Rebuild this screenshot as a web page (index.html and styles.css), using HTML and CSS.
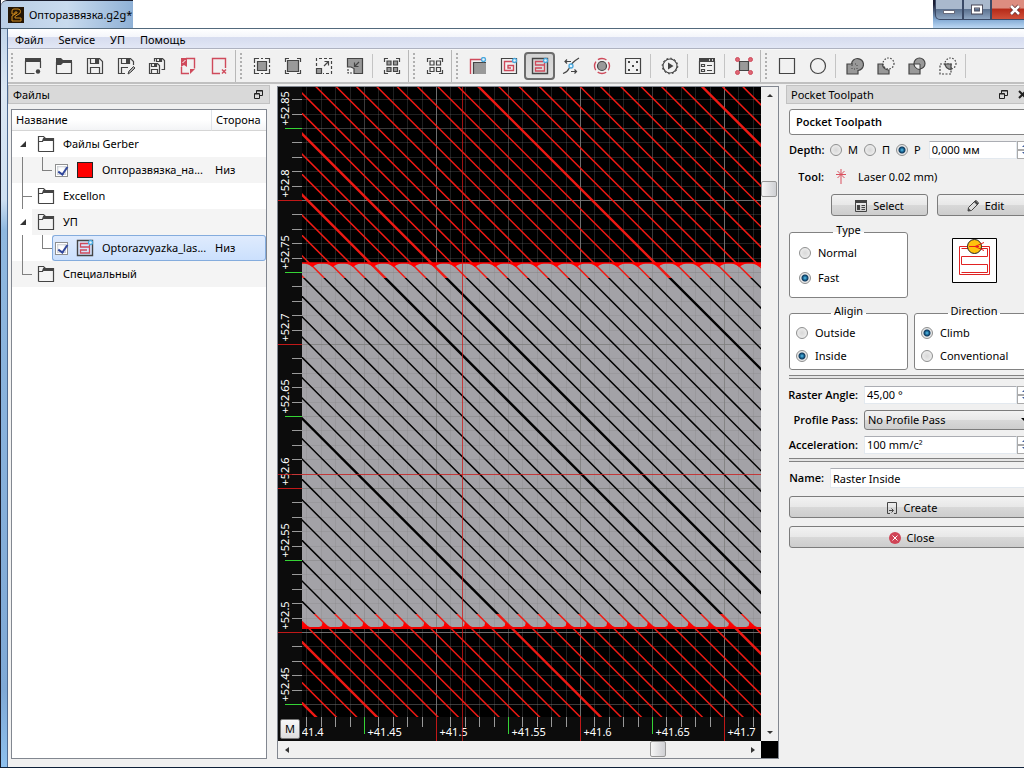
FILE: index.html
```html
<!doctype html>
<html lang="ru">
<head>
  <meta charset="UTF-8">
  <meta name="viewport" content="width=device-width, initial-scale=1.0">
  <title>Опторазвязка.g2g*</title>
  <link rel="stylesheet" href="styles.css">
</head>
<body>
  <svg class="defs" aria-hidden="true">
    <defs>
      <symbol id="i-folder" viewBox="0 0 18 18">
        <path d="M1.5 16.5v-15h5l2 2h-2l-1 3h-4M5.5 6.5l1-3h10v13h-15" fill="none" stroke="#444" stroke-width="1.2"/>
        <path d="M6 3h11v3H6z" fill="#444"/>
      </symbol>
      <symbol id="i-pocket" viewBox="0 0 18 18">
        <path d="M1.5 1.5h15v15h-15z" fill="none" stroke="#444" stroke-width="1.4"/>
        <path d="M12 4.5H4.5v3.500h9v6h-9V11H11M13.500 8V6" fill="none" stroke="#cf4a5b" stroke-width="1.3"/>
        <circle cx="14.500" cy="3.500" r="2" fill="#e4f4fc" stroke="#4ba7dc" stroke-width="1.300"/>
      </symbol>
    </defs>
  </svg>

  <div class="window">
    <header class="titlebar">
      <div class="caption">
        <svg class="app-icon" viewBox="0 0 16 16">
          <path d="M0 0h16v16H0z" fill="#251606"/>
          <path d="M4 7V4q0-2 2-2h4q2.500 0 2.500 2.500T10 7.500L7 9.500V11h6v3H4V9l5-3V5H7v2z" fill="none" stroke="#d08a1c" stroke-width="1"/>
        </svg>
        <span>Опторазвязка.g2g*</span>
      </div>
      <div class="win-buttons">
        <button class="win-btn" aria-label="Свернуть"><svg viewBox="0 0 14 12"><path d="M1.500 6.500h11v3h-11z" fill="#fff" stroke="#556" stroke-width=".8"/></svg></button>
        <button class="win-btn" aria-label="Развернуть"><svg viewBox="0 0 14 12"><path d="M3 2.500h8v6H3z" fill="none" stroke="#445" stroke-width="4"/><path d="M3 2.500h8v6H3z" fill="none" stroke="#fff" stroke-width="2.200"/></svg></button>
        <button class="win-btn win-close" aria-label="Закрыть"><svg viewBox="0 0 14 12"><path d="M3 2l8 8M11 2l-8 8" stroke="#633" stroke-width="4"/><path d="M3 2l8 8M11 2l-8 8" stroke="#fff" stroke-width="2.600"/></svg></button>
      </div>
    </header>

    <div class="client">
      <nav class="menubar">
        <a href="#">Файл</a>
        <a href="#">Service</a>
        <a href="#">УП</a>
        <a href="#">Помощь</a>
      </nav>

      <div class="toolbar">
        <div class="group">
          <button aria-label="New"><svg viewBox="0 0 18 18"><path d="M1 1h16v4H1z" fill="#444"/><path d="M1.500 4v12.500h9M16.500 4v7" class="ln"/><circle cx="14" cy="14.500" r="2.200" fill="#444"/></svg></button>
          <button aria-label="Open"><svg viewBox="0 0 18 18"><path d="M1 1h5l2 2h9v3H8L6 8H1z" fill="#444"/><path d="M1.500 5v11.500h15V5" class="ln"/></svg></button>
          <button aria-label="Save"><svg viewBox="0 0 18 18"><path d="M1.500 1.500h12l3 3v12h-15zM4.500 1.500v5h8v-5M4.500 16.500v-6h9v6" class="ln"/><path d="M9 2h3v4H9z" fill="#444"/></svg></button>
          <button aria-label="Save as"><svg viewBox="0 0 18 18"><path d="M8 16.500H1.500v-15h12l3 3V8M4.500 1.500v5h8v-5M4.500 16.500v-6H11" class="ln"/><path d="M9 2h3v4H9z" fill="#444"/><path d="M11 17l1-3 4.500-4.500 1.500 1.500-4.500 4.500z" fill="#aaa" stroke="#444"/></svg></button>
          <button aria-label="Save all"><svg viewBox="0 0 18 18"><path d="M1.500 6.500h8l2 2v8h-10zM3.500 6.500v3h5v-3M3.500 16.500v-4h6v4" class="ln"/><path d="M6 7h2v2H6zM11 2h2v3h-2z" fill="#444"/><path d="M6.500 4.500v-3h8l2 2v9h-3M8.500 1.500v3h5v-3" class="ln"/></svg></button>
          <button aria-label="Export PDF"><svg viewBox="0 0 18 18"><path d="M7 1.500h8.500v10M2.500 10v6.500H10" class="rd"/><path d="M2 1h6v9L5 8l-3 2z" fill="#cf4a5b"/><path d="M3.500 6l3-3" stroke="#fff"/><path d="M11 12h5l-5 5z" fill="#cf4a5b"/></svg></button>
          <button aria-label="Close file"><svg viewBox="0 0 18 18"><path d="M10 16.500H2.500v-15h13V11M12 12.500l4 4M16 12.500l-4 4" class="rd"/></svg></button>
        </div>
        <div class="group">
          <button aria-label="Zoom fit"><svg viewBox="0 0 18 18"><path d="M4.500 4.500h9v9h-9z" class="gr"/><path d="M1.500 6V1.500H6M12 1.500h4.500V6M16.500 12v4.500H12M6 16.500H1.500V12M8 1.500h2M8 16.500h2M1.500 8v2M16.500 8v2" class="ln"/></svg></button>
          <button aria-label="Zoom selected"><svg viewBox="0 0 18 18"><path d="M3.500 3.500h11v11h-11z" class="gr"/><path d="M1.500 5V1.500H5M13 1.500h3.500V5M16.500 13v3.500H13M5 16.500H1.500V13" class="ln"/></svg></button>
          <button aria-label="Zoom in"><svg viewBox="0 0 18 18"><path d="M1.500 11.500h5v5h-5z" class="gr"/><path d="M1.500 9V1.500h15v15H8" class="ln" stroke-dasharray="3 2"/><path d="M9 9l4-4M9.500 4.500h4v4" class="ln"/></svg></button>
          <button aria-label="Zoom out"><svg viewBox="0 0 18 18"><path d="M1.500 1.500h15v15H8v-5l-3-1.500H1.500z" class="gr"/><path d="M13 5l-4 4M8.500 5.500v4h4" class="ln"/><path d="M2 12v4h4" class="ln" stroke-dasharray="2 1"/></svg></button>
          <span class="sep"></span>
          <button aria-label="Select all"><svg viewBox="0 0 18 18"><path d="M4 4h4v4H4zM10.500 4h4v4h-4zM4 10.500h4v4H4zM10.500 10.500h4v4h-4z" class="gr"/><path d="M1.500 5V1.500H5M13 1.500h3.500V5M16.500 13v3.500H13M5 16.500H1.500V13" class="ln"/></svg></button>
        </div>
        <div class="group">
          <button aria-label="Deselect"><svg viewBox="0 0 18 18"><path d="M4 4h4v4H4zM10.500 4h4v4h-4zM4 10.500h4v4H4zM10.500 10.500h4v4h-4z" class="ln"/><path d="M1.500 5V1.500H5M13 1.500h3.500V5M16.500 13v3.500H13M5 16.500H1.500V13" class="ln"/></svg></button>
        </div>
        <div class="group">
          <button aria-label="Profile"><svg viewBox="0 0 18 18"><path d="M1.500 17V2.500H14" class="rd"/><path d="M4 5h13v12H4z" fill="#999"/><path d="M4.500 17V5.500H17" class="ln"/><circle cx="14.500" cy="2.500" r="2" class="bl"/></svg></button>
          <button aria-label="Spiral pocket"><svg viewBox="0 0 18 18"><path d="M1.500 1.500h15v15h-15z" class="ln"/><path d="M13 4.500H4.500v9h9v-5H8v2.500h3" class="rd"/><circle cx="14.500" cy="3.500" r="2" class="bl"/></svg></button>
          <button class="active" aria-label="Raster pocket"><svg><use href="#i-pocket"/></svg></button>
          <button aria-label="Voronoi"><svg viewBox="0 0 18 18"><path d="M1 16.500q4-1 6-5t4-6 6-4.500M3 4.500h6M5 2.500l-2 2 2 2M9 14.500h5M12.500 12.500l2 2-2 2" class="ln"/><circle cx="9" cy="9" r="2" class="bl"/></svg></button>
          <button aria-label="Thermal"><svg viewBox="0 0 18 18"><circle cx="9" cy="9" r="7.500" class="rd" stroke-dasharray="9 2.780" stroke-dashoffset="4.500"/><circle cx="9" cy="9" r="4.500" class="gr"/></svg></button>
          <button aria-label="Drilling"><svg viewBox="0 0 18 18"><path d="M1.500 1.500h15v15h-15z" class="ln"/><path d="M4 4h2v2H4zM12 4h2v2h-2zM8 8h2v2H8zM4 12h2v2H4zM12 12h2v2h-2z" fill="#444"/></svg></button>
          <span class="sep"></span>
          <button aria-label="Run"><svg viewBox="0 0 18 18"><circle cx="9" cy="9" r="7" class="ln"/><circle cx="9" cy="9" r="7.800" fill="none" stroke="#444" stroke-dasharray="2 2.080"/><path d="M7 5.500L12.500 9 7 12.500z" fill="#444"/></svg></button>
          <span class="sep"></span>
          <button aria-label="Properties"><svg viewBox="0 0 18 18"><path d="M1 1h16v4H1z" fill="#444"/><path d="M11 3h1M14 3h1" stroke="#fff" stroke-width="1.500"/><path d="M1.500 4v12.500h15V4M3.500 7.500h3v2h-3zM3.500 12.500h3v2h-3zM9 8.500h5M9 13.500h5" class="ln"/></svg></button>
          <span class="sep"></span>
          <button aria-label="Snap"><svg viewBox="0 0 18 18"><path d="M4.500 4.500h9v9h-9z" class="gr"/><g fill="#dd6674" stroke="#cf4a5b"><circle cx="2.500" cy="2.500" r="2"/><circle cx="15.500" cy="2.500" r="2"/><circle cx="2.500" cy="15.500" r="2"/><circle cx="15.500" cy="15.500" r="2"/></g></svg></button>
        </div>
        <div class="group last">
          <button aria-label="Rectangle"><svg viewBox="0 0 18 18"><path d="M1.500 1.500h15v15h-15z" class="ln"/></svg></button>
          <button aria-label="Circle"><svg viewBox="0 0 18 18"><circle cx="9" cy="9" r="7.500" class="ln"/></svg></button>
          <span class="sep"></span>
          <button aria-label="Union"><svg viewBox="0 0 18 18"><path d="M1 7h4.500a6 6 0 1 1 6.500 6.500V17H1z" class="gr"/><path d="M6 7h5v6M6 8v4h5" fill="none" stroke="#444" stroke-dasharray="1 2"/></svg></button>
          <button aria-label="Subtract"><svg viewBox="0 0 18 18"><path d="M1 7h4.500a6 6 0 0 0 6.500 6V17H1z" class="gr"/><circle cx="11.500" cy="6.500" r="5.500" class="ln" stroke-dasharray="1.500 1.500"/></svg></button>
          <button aria-label="Exclude"><svg viewBox="0 0 18 18"><path d="M1 7h11v10H1z" class="gr"/><circle cx="11.500" cy="6.500" r="5.500" class="gr"/><path d="M6 7h6v5.500a6 6 0 0 1-6-5.500z" fill="#f0f0f0" stroke="#444"/></svg></button>
          <button aria-label="Intersect"><svg viewBox="0 0 18 18"><path d="M1 7h11v10H1z" class="ln" stroke-dasharray="2 1.500"/><circle cx="11.500" cy="6.500" r="5.500" class="ln" stroke-dasharray="1.500 1.500"/><path d="M6 7h6v5.500a6 6 0 0 1-6-5.500z" class="gr"/></svg></button>
          <span class="sep"></span>
        </div>
      </div>

      <main class="main">
        <section class="dock files">
          <h2 class="dock-title">Файлы
            <button aria-label="Открепить"><svg viewBox="0 0 9 9"><path d="M2.500 3V.500h6v5H6M2.500 1h6M.500 3.500h5v5h-5zM.500 4h5" fill="none" stroke="#222"/></svg></button>
          </h2>
          <div class="tree">
            <table>
              <thead>
                <tr><th>Название</th><th>Сторона</th></tr>
              </thead>
              <tbody>
                <tr>
                  <td><div class="node"><i class="branch open"></i><svg class="ico"><use href="#i-folder"/></svg>Файлы Gerber</div></td>
                  <td></td>
                </tr>
                <tr class="alt">
                  <td><div class="node"><i class="branch line"></i><i class="branch corner"></i><label><input type="checkbox" checked><span class="swatch"></span>Опторазвязка_на...</label></div></td>
                  <td>Низ</td>
                </tr>
                <tr>
                  <td><div class="node"><i class="branch line tee"></i><svg class="ico"><use href="#i-folder"/></svg>Excellon</div></td>
                  <td></td>
                </tr>
                <tr class="alt">
                  <td><div class="node"><i class="branch open"></i><svg class="ico"><use href="#i-folder"/></svg>УП</div></td>
                  <td></td>
                </tr>
                <tr class="selected">
                  <td><div class="node"><i class="branch line"></i><i class="branch corner"></i><label><input type="checkbox" checked><svg class="ico"><use href="#i-pocket"/></svg>Optorazvyazka_las...</label></div></td>
                  <td>Низ</td>
                </tr>
                <tr class="alt">
                  <td><div class="node"><i class="branch corner"></i><svg class="ico"><use href="#i-folder"/></svg>Специальный</div></td>
                  <td></td>
                </tr>
              </tbody>
            </table>
          </div>
        </section>

        <section class="view">
          <div class="plot">
            <svg id="plot"></svg>
            <button class="units">M</button>
          </div>
          <div class="scroll vertical">
            <button class="arrow up" aria-label="Вверх"></button>
            <span class="before"></span><span class="thumb"></span><span class="after"></span>
            <button class="arrow down" aria-label="Вниз"></button>
          </div>
          <div class="scroll horizontal">
            <button class="arrow left" aria-label="Влево"></button>
            <span class="before"></span><span class="thumb"></span><span class="after"></span>
            <button class="arrow right" aria-label="Вправо"></button>
          </div>
          <div class="corner-box"></div>
        </section>

        <section class="dock props">
          <div class="props-inner">
            <h2 class="dock-title">Pocket Toolpath
              <span>
                <button aria-label="Открепить"><svg viewBox="0 0 9 9"><path d="M2.500 3V.500h6v5H6M2.500 1h6M.500 3.500h5v5h-5zM.500 4h5" fill="none" stroke="#222"/></svg></button>
                <button aria-label="Закрыть панель"><svg viewBox="0 0 9 9"><path d="M1 1l7 7M8 1L1 8" stroke="#222" stroke-width="2"/></svg></button>
              </span>
            </h2>
            <form class="form">
              <h3 class="heading">Pocket Toolpath</h3>

              <div class="row depth">
                <b class="short">Depth:</b>
                <label><input type="radio" name="depth">М</label>
                <label><input type="radio" name="depth">П</label>
                <label><input type="radio" name="depth" checked>Р</label>
                <div class="spin"><input type="text" value="0,000 мм" aria-label="Depth"><span class="steps"><i></i><i></i></span></div>
              </div>

              <div class="row tool">
                <b class="short">Tool:</b>
                <svg class="laser" viewBox="0 0 12 16"><path d="M6 0v15M1 5.500h10M2.500 2l7 7M9.500 2l-7 7" stroke="#d9515f" fill="none"/></svg>
                <span>Laser 0.02 mm)</span>
              </div>

              <div class="row pick">
                <button type="button"><svg viewBox="0 0 12 12"><path d="M.500.500h11v11H.500z" fill="none" stroke="#444"/><path d="M0 0h12v3H0zM2 5h3v5H2z" fill="#444"/><path d="M6.500 5.500H10M6.500 7.500H10M6.500 9.500H10" stroke="#444"/></svg>Select</button>
                <button type="button"><svg viewBox="0 0 12 12"><path d="M1 11l.500-3.500L8 1q1-.8 2 .2l.8.8q1 1 .2 2L4.500 10.500z" fill="#ddd" stroke="#444"/><path d="M7 2l3 3 1.500-1.500-3-3zM1 11l.400-3L4 10.600z" fill="#444"/></svg>Edit</button>
              </div>

              <div class="groups">
                <fieldset class="type">
                  <legend>Type</legend>
                  <label><input type="radio" name="type">Normal</label>
                  <label><input type="radio" name="type" checked>Fast</label>
                </fieldset>
                <svg class="preview" viewBox="0 0 45 45">
                  <path d="M.500.500h44v44H.500z" fill="#fff" stroke="#000"/>
                  <path d="M7.500 8.500h30v28h-30zM9.500 10.500h26v8h-26v8h26v8h-26" fill="none" stroke="#e02222"/>
                  <circle cx="22.500" cy="8.500" r="7" fill="#ffc20d" stroke="#222"/>
                  <path d="M17 8.500h10M23 8.500l9-4M23 8.500l9 4" stroke="#e8201a"/>
                </svg>
                <fieldset>
                  <legend>Aligin</legend>
                  <label><input type="radio" name="align">Outside</label>
                  <label><input type="radio" name="align" checked>Inside</label>
                </fieldset>
                <fieldset>
                  <legend>Direction</legend>
                  <label><input type="radio" name="dir" checked>Climb</label>
                  <label><input type="radio" name="dir">Conventional</label>
                </fieldset>
              </div>

              <hr>
              <div class="row field">
                <label class="long" for="angle">Raster Angle:</label>
                <div class="spin"><input type="text" id="angle" value="45,00 °"><span class="steps"><i></i><i></i></span></div>
              </div>
              <div class="row field combo">
                <label class="long" for="pass">Profile Pass:</label>
                <select id="pass"><option>No Profile Pass</option></select>
              </div>
              <div class="row field">
                <label class="long" for="accel">Acceleration:</label>
                <div class="spin"><input type="text" id="accel" value="100 mm/c²"><span class="steps"><i></i><i></i></span></div>
              </div>
              <hr>

              <div class="row name">
                <label class="short" for="name">Name:</label>
                <input type="text" id="name" value="Raster Inside">
              </div>
              <button type="button" class="wide"><svg viewBox="0 0 12 12"><path d="M4 11.500H1.500v-11h9v11H8M3 8.500h4M5.500 6.500l2 2-2 2" fill="none" stroke="#444"/></svg>Create</button>
              <button type="button" class="wide"><svg viewBox="0 0 12 12"><circle cx="6" cy="6" r="6" fill="#d04456"/><path d="M3.500 3.500l5 5M8.500 3.500l-5 5" stroke="#fff"/></svg>Close</button>
            </form>
          </div>
        </section>
      </main>
    </div>
  </div>

  <script src="plot.js"></script>
</body>
</html>
```
FILE: styles.css
```css
* {
  box-sizing: border-box;
}

body {
  margin: 0;
  padding: 0 8px 6px 0;
  min-height: 100vh;
  display: flex;
  background: #fff;
  color: #000;
  font: 11px/16px "Noto Sans", "Liberation Sans", sans-serif;
}

button, input, select {
  font: inherit;
  color: inherit;
  margin: 0;
}

button {
  padding: 0;
  border: 0;
  background: none;
}

.defs {
  position: absolute;
  width: 0;
  height: 0;
}

.window {
  flex: 1;
  min-width: 0;
  display: flex;
  flex-direction: column;
  border-left: 1px solid #1a1c2c;
  border-bottom: 1px solid #0d2038;
  background: linear-gradient(#b7cde6, #dbe7f3 12%, #cfe0f2 26%, #8fb8e0 30%, #7fa9d6 90%, #8dc0ee);
}

/* title bar */
.titlebar {
  height: 29px;
  display: flex;
  justify-content: space-between;
  background: #fff;
  border-bottom: 1px solid #52697c;
}

.caption {
  width: 132px;
  padding-left: 7px;
  display: flex;
  align-items: center;
  gap: 5px;
  overflow: hidden;
  white-space: nowrap;
  background: linear-gradient(90deg, #b9cde5, #c9dbee 50%, #8fb1d6);
  border-top: 1px solid #1a1c2c;
  border-radius: 6px 0 0 0;
}

.app-icon {
  width: 16px;
  height: 16px;
  flex: none;
}

.win-buttons {
  width: 91px;
  padding-left: 2px;
  display: flex;
  align-items: flex-start;
  overflow: hidden;
  background: linear-gradient(#1b1d33 4px, #86add6 20px, #bcd8f4);
}

.win-btn {
  flex: none;
  width: 28px;
  height: 20px;
  display: flex;
  align-items: center;
  justify-content: center;
  border: 1px solid #3b4a66;
  border-top: 0;
  background: linear-gradient(#a9b9cd 45%, #5d7391 50%, #8fa6c2);
}

.win-btn:first-child {
  border-radius: 0 0 0 5px;
}

.win-btn svg {
  width: 14px;
  height: 12px;
}

.win-close {
  width: 48px;
  background: linear-gradient(#dd8d80 40%, #b72c1a 50%, #d0503a);
}

/* client area */
.client {
  flex: 1;
  min-height: 0;
  margin-left: 6px;
  border-left: 1px solid #4d6a92;
  display: flex;
  flex-direction: column;
  background: #f0f0f0;
}

.menubar {
  height: 20px;
  padding: 2px 0 0 7px;
  display: flex;
  align-items: center;
  gap: 15px;
  background: linear-gradient(#fff 0, #f4f6fb 40%, #d6dcef 45%, #e2e7f5);
  border-bottom: 1px solid #aeb2c0;
}

.menubar a {
  color: #000;
  text-decoration: none;
}

.toolbar {
  height: 35px;
  display: flex;
  overflow: hidden;
  background: #f1f1f1;
  border-top: 1px solid #f8f8f8;
  border-bottom: 2px solid #c0c0c0;
}

.group {
  flex: none;
  display: flex;
  align-items: center;
  padding-right: 1px;
  border-right: 1px solid #b8b8b8;
}

.group::before {
  content: "";
  width: 2px;
  height: 26px;
  margin: 0 4px;
  background: repeating-linear-gradient(#b0b0b0 0 2px, transparent 2px 4px);
}

.group:first-child::before {
  margin-left: 3px;
}

.group.last {
  border-right: 0;
}

.group button {
  width: 31px;
  height: 28px;
  display: flex;
  align-items: center;
  justify-content: center;
}

.group button.active {
  border: 2px solid #6c6c6c;
  border-radius: 4px;
  background: linear-gradient(#d2d2d2, #e0e0e0);
}

.group svg {
  width: 18px;
  height: 18px;
}

.ln {
  fill: none;
  stroke: #444;
  stroke-width: 1.2;
}

.rd {
  fill: none;
  stroke: #cf4a5b;
  stroke-width: 1.4;
}

.gr {
  fill: #999;
  stroke: #444;
  stroke-width: 1.2;
}

.bl {
  fill: #e4f4fc;
  stroke: #4ba7dc;
  stroke-width: 1.3;
}

.sep {
  width: 1px;
  height: 24px;
  margin: 0 3px 0 2px;
  background: #c4c4c4;
}

/* docks */
.main {
  flex: 1;
  min-height: 0;
  display: flex;
  gap: 7px;
  padding-bottom: 8px;
}

.dock-title {
  height: 19px;
  margin: 1px 0 0;
  padding: 0 6px 0 4px;
  display: flex;
  align-items: center;
  justify-content: space-between;
  font-size: 11px;
  font-weight: normal;
  background: #d9d9d9;
  border: 1px solid #c2c2c2;
}

.dock-title span {
  display: flex;
  gap: 10px;
}

.dock-title svg {
  display: block;
  width: 9px;
  height: 9px;
}

.files {
  width: 262px;
  display: flex;
  flex-direction: column;
}

.tree {
  flex: 1;
  margin: 5px 3px 0;
  border: 1px solid #828790;
  background: #fff;
}

.tree table {
  width: 100%;
  table-layout: fixed;
  border-collapse: separate;
  border-spacing: 0;
}

.tree th {
  height: 21px;
  padding: 0 4px;
  text-align: left;
  font-weight: normal;
  border-bottom: 1px solid #d5d5d5;
  background: linear-gradient(#fff 50%, #f3f4f6);
}

.tree th + th {
  width: 55px;
  border-left: 1px solid #dfe3e8;
}

.tree td {
  height: 26px;
  padding: 0;
}

.tree td + td {
  padding-left: 4px;
}

.node, .node label {
  height: 26px;
  display: flex;
  align-items: center;
  white-space: nowrap;
}

.alt td {
  background: #f4f4f4;
}

.selected td + td, .selected label {
  background: linear-gradient(#dfebfd, #cbe0fd);
  border: 1px solid #84acdd;
}

.selected label {
  flex: 1;
  border-right: 0;
  border-radius: 3px 0 0 3px;
}

.selected td + td {
  border-left: 0;
  border-radius: 0 3px 3px 0;
}

.node label {
  padding-left: 3px;
}

.selected label {
  padding-left: 2px;
}

.branch {
  position: relative;
  width: 20px;
  height: 26px;
  flex: none;
}

.branch::before, .branch::after {
  content: "";
  position: absolute;
}

.line::before, .corner::before {
  left: 10px;
  top: 0;
  bottom: 0;
  border-left: 1px solid #808080;
}

.corner::before {
  bottom: 13px;
}

.corner::after, .tee::after {
  left: 10px;
  right: 0;
  top: 13px;
  border-top: 1px solid #808080;
}

.open {
  background: #fff;
}

.open::before {
  left: 8px;
  top: 10px;
  width: 6px;
  height: 6px;
  background: #333;
  clip-path: polygon(100% 0, 100% 100%, 0 100%);
}

.ico {
  width: 18px;
  height: 18px;
  margin: 0 8px 0 5px;
  flex: none;
}

.node label .ico {
  width: 18px;
  height: 18px;
  margin: 0 8px;
}

.swatch {
  width: 16px;
  height: 16px;
  margin: 0 9px;
  flex: none;
  background: #f00;
  border: 1px solid #222;
}

input[type="checkbox"] {
  appearance: none;
  position: relative;
  width: 13px;
  height: 13px;
  flex: none;
  border: 1px solid #8e8f8f;
  background: #fff;
  box-shadow: inset 0 0 0 1px #fff, inset 0 0 2px 2px #c8ccd2;
}

input[type="checkbox"]:checked::after {
  content: "";
  position: absolute;
  left: 4px;
  top: 0;
  width: 4px;
  height: 8px;
  border: solid #31479b;
  border-width: 0 2px 2px 0;
  transform: rotate(35deg);
}

/* drawing view */
.view {
  flex: 1;
  min-width: 0;
  margin-top: 2px;
  display: grid;
  grid-template: 1fr 17px / 1fr 17px;
  border: 1px solid #828790;
  background: #f0f0f0;
}

.plot {
  position: relative;
  overflow: hidden;
  background: #000;
}

.plot svg {
  position: absolute;
  width: 100%;
  height: 100%;
}

.plot text {
  fill: #fff;
  font: 11px "Noto Sans", sans-serif;
}

.units {
  position: absolute;
  left: 2px;
  bottom: 2px;
  width: 20px;
  height: 20px;
  border: 1px solid #777;
  border-radius: 2px;
  background: linear-gradient(#f8f8f8, #dcdcdc);
}

.scroll {
  display: flex;
  background: #f0f0f0;
}

.vertical {
  flex-direction: column;
}

.horizontal .before, .vertical .after {
  flex: 82;
}

.horizontal .after {
  flex: 18;
}

.vertical .before {
  flex: 12;
}

.thumb {
  width: 16px;
  height: 16px;
  flex: none;
  border: 1px solid #979797;
  border-radius: 2px;
  background: linear-gradient(90deg, #f6f6f6, #cfd0d4);
}

.arrow {
  width: 17px;
  height: 17px;
  display: flex;
  align-items: center;
  justify-content: center;
}

.arrow::before {
  content: "";
  border: 3px solid transparent;
}

.up::before { border-bottom-color: #333; border-top: 0; }
.down::before { border-top-color: #333; border-bottom: 0; }
.left::before { border-right: 4px solid #333; border-left: 0; }
.right::before { border-left: 4px solid #333; border-right: 0; }

.corner-box {
  background: #000;
}

/* toolpath panel, wider than the room left for it */
.props {
  width: 238px;
  overflow: hidden;
}

.props-inner {
  width: 252px;
}

.props .dock-title {
  padding-right: 10px;
}

.form {
  width: 245px;
  margin: 5px 0 0 3px;
}

.heading {
  height: 26px;
  margin: 0 0 5px;
  padding: 0 6px;
  line-height: 24px;
  font: 600 11px/24px "Open Sans", "Noto Sans", sans-serif;
  border: 1px solid #828282;
  border-radius: 3px;
  background: #fff;
}

.row {
  display: flex;
  align-items: center;
  gap: 6px;
}

.row b, .short, .long {
  font-family: "Open Sans", "Noto Sans", sans-serif;
  font-weight: 600;
  text-align: right;
  white-space: nowrap;
}

.short {
  width: 35px;
  flex: none;
}

.long {
  width: 69px;
  flex: none;
}

.row label {
  display: flex;
  align-items: center;
  justify-content: flex-end;
  gap: 6px;
}

.depth {
  height: 19px;
}

.depth .spin {
  margin-left: 2px;
}

.tool {
  height: 35px;
}

.laser {
  width: 12px;
  height: 16px;
  margin: 0 5px;
}

.form button {
  height: 22px;
  padding-top: 1px;
  display: flex;
  align-items: center;
  justify-content: center;
  gap: 6px;
  border: 1px solid #7c7c7c;
  border-radius: 3px;
  background: linear-gradient(#f2f2f2, #e8e8e8 48%, #d8d8d8 52%, #cdcdcd);
}

.form button svg {
  width: 12px;
  height: 12px;
}

.pick {
  gap: 9px;
  padding-left: 42px;
}

.pick button {
  flex: 1;
}

input[type="text"] {
  width: 100%;
  min-width: 0;
  height: 18px;
  padding: 0 2px;
  border: 1px solid #e3e9ef;
  border-top-color: #abadb3;
  background: #fff;
}

.name {
  padding-top: 3px;
}

.name input[type="text"] {
  height: 20px;
}

.spin {
  flex: 1;
  min-width: 0;
  display: flex;
}

.steps {
  width: 17px;
  height: 18px;
  flex: none;
  display: flex;
  flex-direction: column;
  background: #fff;
}

.steps i {
  flex: 1;
  display: flex;
  align-items: center;
  justify-content: center;
  border: 1px solid #aaa;
}

.steps i::before {
  content: "";
  border: 4px solid transparent;
  border-top: 0;
  border-bottom-color: #3f5c9a;
}

.steps i + i::before {
  transform: rotate(180deg);
}

input[type="radio"] {
  appearance: none;
  width: 12px;
  height: 12px;
  flex: none;
  border: 1px solid #8e8f8f;
  border-radius: 50%;
  background: radial-gradient(#d8d8d8, #f4f4f4);
}

input[type="radio"]:checked {
  background: radial-gradient(#5cc4ee 0, #17618f 2px, #123a5c 3px, #e8e8e8 4px);
}

.groups {
  margin-top: 6px;
  display: grid;
  grid-template-columns: 119px 1fr;
  column-gap: 6px;
  align-items: start;
}

fieldset {
  min-width: 0;
  height: 67px;
  margin: 0;
  padding: 0 6px;
  border: 1px solid #828282;
  border-radius: 3px;
  background: #fff;
}

.type {
  height: 76px;
  margin-bottom: 5px;
  padding: 0 9px;
}

fieldset legend {
  margin: 0 auto -2px;
  padding: 0 3px 4px;
  background: linear-gradient(#f0f0f0 50%, #fff 50%);
}

fieldset label {
  height: 23px;
  display: flex;
  align-items: center;
  gap: 7px;
}

.type label {
  height: 25px;
}

.preview {
  width: 45px;
  height: 45px;
  margin-top: 16px;
  justify-self: center;
}

hr {
  height: 4px;
  margin: 5px 0 3px;
  border: 1px solid #828282;
  border-width: 1px 0;
  background: #e4e4e4;
}

.field {
  height: 25px;
}

.field + hr {
  margin-top: 1px;
}

.combo {
  position: relative;
}

.combo::after {
  content: "";
  position: absolute;
  right: 5px;
  border: 4px solid transparent;
  border-top-color: #000;
  border-bottom: 0;
}

.field select {
  flex: 1;
  min-width: 0;
  appearance: none;
  height: 20px;
  padding: 0 3px;
  border: 1px solid #7c7c7c;
  border-radius: 3px;
  background: linear-gradient(#f2f2f2, #e8e8e8 48%, #d8d8d8 52%, #cdcdcd);
}

.form .wide {
  width: 100%;
  margin-top: 8px;
}
```
FILE: plot.js
```js
const RULER = 24;
const STEP = 72;          // 0.05 mm
const HATCH = 20.33;
const THICK = [-3, 0, 11, 22, 25, 36, 47];
const BAND = { top: 176, bottom: 541 };
const svg = document.getElementById('plot');

function line(x1, y1, x2, y2, color, width, extra) {
  return `<line x1="${x1}" y1="${y1}" x2="${x2}" y2="${y2}" stroke="${color}" stroke-width="${width || 1}" ${extra || ''}/>`;
}

function hatch(color) {
  let out = '';
  for (let k = -15; k < 70; k++) {
    // y = x + c
    const c = 531 - k * HATCH;
    out += line(-200, c - 200, 1400, c + 1400, color, THICK.includes(k) ? 2.4 : 1.5);
  }
  return out;
}

function grid(w, bottom) {
  let out = '';
  for (let i = -20; i < 120; i++) {
    const x = Math.round(86 + i * STEP / 5) + 0.5;
    const y = Math.round(41 + i * STEP / 5) + 0.5;
    const minor = i % 5 !== 0;
    out += line(x, 0, x, bottom, '#808080', 1, `opacity="${minor ? 0.25 : i % 10 ? 0.85 : 0.45}"`);
    out += line(RULER, y, w, y, '#808080', 1, `opacity="${minor ? 0.25 : i % 10 ? 0.85 : 0.45}"`);
  }
  return out;
}

function draw() {
  const w = svg.clientWidth;
  const h = svg.clientHeight;
  const bottom = h - RULER;
  const { top, bottom: end } = BAND;
  let out = `<defs>
    <clipPath id="area"><rect x="${RULER}" y="0" width="${w - RULER}" height="${bottom}"/></clipPath>
    <clipPath id="inner"><rect x="${RULER}" y="${top + 15}" width="${w - RULER}" height="${end - top - 29}"/></clipPath>
  </defs>`;

  out += '<g clip-path="url(#area)">';
  out += `<rect x="${RULER}" y="${top}" width="${w}" height="${end - top}" fill="#a3a2a7"/>`;
  out += grid(w, bottom);
  out += '<g clip-path="url(#inner)">';
  out += hatch('#000');
  out += '</g>';
  out += `<clipPath id="outer"><path d="M0 0h${w}v${top + 15}H0zM0 ${end - 14}h${w}V${h}H0z"/></clipPath>`;
  out += `<g clip-path="url(#outer)">${hatch('#ee1a14')}</g>`;

  // overlap of neighbouring passes along both edges of the pocket
  for (let k = -15; k < 70; k++) {
    const c = 531 - k * HATCH;
    const a = top + 3 - c;
    const b = end - 4 - c;
    out += `<path d="M${a - 8} ${top}h16l-5 2-3 2-3-2z" fill="#f00"/>`;
    out += `<path d="M${b - 8} ${end}l5-2 1-4 5 4 5 2z" fill="#f00"/>`;
  }
  out += line(RULER, top, w, top, '#f00', 1.5) + line(RULER, end, w, end, '#e00', 2);
  out += '</g>';

  // rulers
  out += `<rect width="${RULER}" height="${h}" fill="#0c0c0c"/><rect y="${bottom}" width="${w}" height="${RULER}" fill="#0c0c0c"/>`;
  for (let i = -5; i < 120; i++) {
    const x = Math.round(86 + i * STEP / 5) + 0.5;
    const y = Math.round(41 + i * STEP / 5) + 0.5;
    const red = i % 5 === 0 && i % 10 !== 0;
    const color = red ? '#c01818' : i % 5 ? '#999' : '#35d435';
    const len = red ? RULER : i % 5 ? 10 : 17;
    if (x > RULER && x < w) out += line(x, bottom, x, bottom + len, color);
    if (y > 0 && y < bottom) out += line(RULER - len, y, RULER, y, color);
    if (i % 5 === 0) {
      const n = i / 5;
      const xl = '+' + +(41.45 + n * 0.05).toFixed(2);
      const yl = '+' + +(52.85 - n * 0.05).toFixed(2);
      if (x < w) out += `<text x="${x + 3}" y="${bottom + 19}">${xl}</text>`;
      if (y > 0 && y < bottom) out += `<text transform="translate(11 ${y - 3}) rotate(-90)">${yl}</text>`;
    }
  }
  out += `<rect y="${bottom}" width="${RULER}" height="${RULER}" fill="#0c0c0c"/>`;

  // cursor cross
  out += line(184.5, 0, 184.5, h, '#d01818', 1, 'opacity=".75"') + line(0, 387.5, w, 387.5, '#d01818', 1, 'opacity=".75"');
  svg.innerHTML = out;
}

draw();
window.addEventListener('resize', draw);
```
